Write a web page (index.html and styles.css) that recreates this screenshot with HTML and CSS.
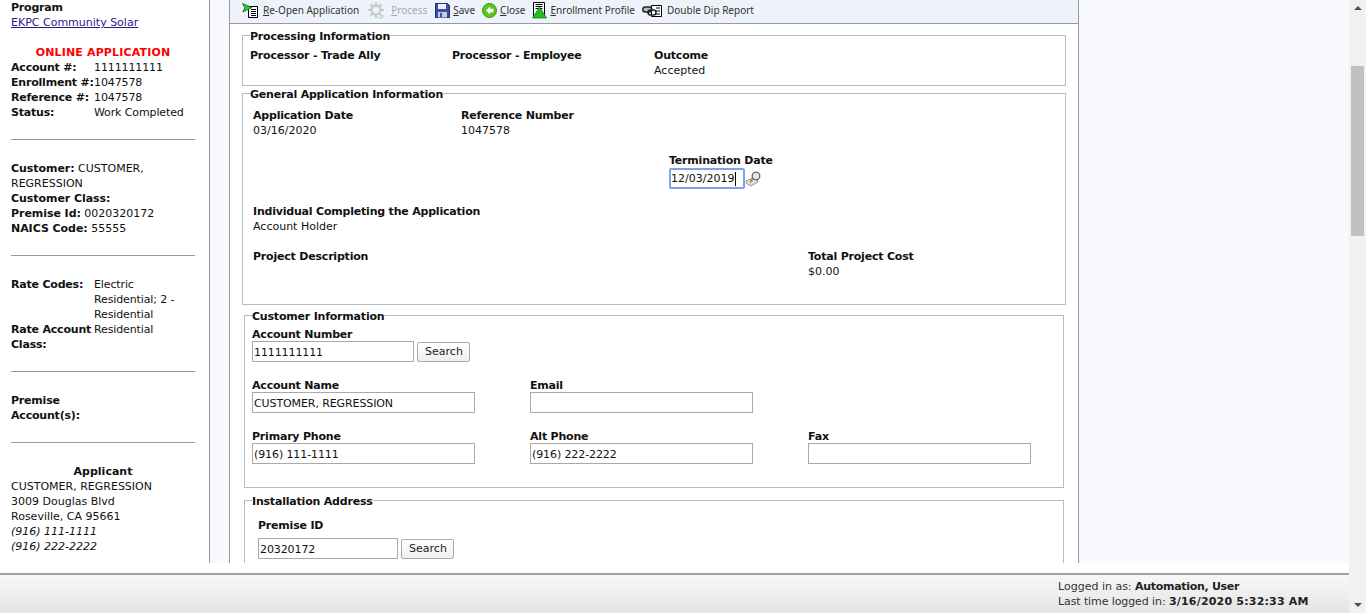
FILE: index.html
```html
<!DOCTYPE html>
<html lang="en">
<head>
    <meta charset="UTF-8">
    <title>Application</title>
    <link rel="stylesheet" href="styles.css">
</head>
<body>
<div class="window">
    <div class="page">
        <div class="content">
            <aside class="sidebar">
                <div class="bold">Program</div>
                <div><a href="#">EKPC Community Solar</a></div>
                <div class="online">ONLINE APPLICATION</div>
                <div class="pairs">
                    <b>Account #:</b><span>1111111111</span>
                    <b>Enrollment #:</b><span>1047578</span>
                    <b>Reference #:</b><span>1047578</span>
                    <b>Status:</b><span>Work Completed</span>
                </div>
                <hr>
                <div class="info"><b>Customer:</b> CUSTOMER, REGRESSION</div>
                <div class="info"><b>Customer Class:</b></div>
                <div class="info"><b>Premise Id:</b> 0020320172</div>
                <div class="info"><b>NAICS Code:</b> 55555</div>
                <hr>
                <div class="pairs">
                    <b>Rate Codes:</b><span>Electric Residential; 2 - Residential</span>
                    <b>Rate Account Class:</b><span>Residential</span>
                </div>
                <hr>
                <div class="pairs">
                    <b>Premise Account(s):</b><span></span>
                </div>
                <hr>
                <div class="applicant-title">Applicant</div>
                <div>CUSTOMER, REGRESSION</div>
                <div>3009 Douglas Blvd</div>
                <div>Roseville, CA 95661</div>
                <div><i>(916) 111-1111</i></div>
                <div><i>(916) 222-2222</i></div>
            </aside>
            <main class="main">
                <div class="toolbar">
                    <a class="tool tool-reopen" href="#">
                        <svg width="17" height="16" viewBox="0 0 17 16"><path d="M6.500 3.500h9v11h-9z" fill="#fff" stroke="#000"/><path d="M9 6.500h5M9 8.500h5M9 10.500h5M9 12.500h5" stroke="#000"/><path d="M.500 .500L10 4.500 .800 9l2-4.200z" fill="#35c435" stroke="#0a6a0a" stroke-width=".8"/></svg>
                        <span><u>R</u>e-Open Application</span>
                    </a>
                    <a class="tool tool-process" href="#">
                        <svg width="18" height="18" viewBox="0 0 18 18"><circle cx="8" cy="8" r="4.500" fill="none" stroke="#ccc" stroke-width="2.500"/><path d="M8 0v3M8 13v3M0 8h3M13 8h3M2.300 2.300l2 2M11.700 11.700l2 2M13.700 2.300l-2 2M4.300 11.700l-2 2" stroke="#c8c8c8" stroke-width="2"/><path d="M9 16l6-4 2 3-4 2z" fill="#cfe0d0"/></svg>
                        <span><u>P</u>rocess</span>
                    </a>
                    <a class="tool" href="#">
                        <svg width="15" height="15" viewBox="0 0 15 15"><path d="M.500.500h12l2 2v12H.500z" fill="#3c4fa8" stroke="#23306e"/><path d="M3 1h8v5H3z" fill="#eef"/><path d="M3 9h9v5.500H3z" fill="#c6cbe0"/><path d="M5 10h2v4H5z" fill="#3c4fa8"/></svg>
                        <span><u>S</u>ave</span>
                    </a>
                    <a class="tool" href="#">
                        <svg width="15" height="15" viewBox="0 0 15 15"><circle cx="7.500" cy="7.500" r="7" fill="#5cc41e" stroke="#3a9a12"/><path d="M8 3.500L4 7.500l4 4V9.200h3.500V5.800H8z" fill="#fff"/></svg>
                        <span><u>C</u>lose</span>
                    </a>
                    <a class="tool" href="#">
                        <svg width="15" height="17" viewBox="0 0 15 17"><path d="M1.500.500h11v14h-11z" fill="#fff" stroke="#000"/><path d="M3.500 2.500h7M3.500 4.500h7M3.500 6.500h7" stroke="#000"/><path d="M7.500 5L14.500 16H.500z" fill="#22c022" stroke="#0a6a0a" stroke-width=".7"/></svg>
                        <span><u>E</u>nrollment Profile</span>
                    </a>
                    <a class="tool tool-dip" href="#">
                        <svg width="20" height="14" viewBox="0 0 20 14"><path d="M9.500 1.500h10v11h-10z" fill="#fff" stroke="#000"/><path d="M14 4h4M14 7h4M14 10h4" stroke="#000"/><rect x=".800" y="3" width="9" height="5" rx="2.500" fill="#bbb" stroke="#222" stroke-width="1.500"/><rect x="6" y="6" width="8" height="5" rx="2.500" fill="none" stroke="#222" stroke-width="1.500"/></svg>
                        <span>Double Dip Report</span>
                    </a>
                </div>
                <div class="sheet">
                    <fieldset class="box box-wide box-processing">
                        <legend>Processing Information</legend>
                        <div class="proc-row">
                            <div class="proc-col"><b>Processor - Trade Ally</b></div>
                            <div class="proc-col"><b>Processor - Employee</b></div>
                            <div class="proc-col"><b>Outcome</b><br>Accepted</div>
                        </div>
                    </fieldset>
                    <fieldset class="box box-wide box-general">
                        <legend>General Application Information</legend>
                        <div class="gen-row">
                            <div class="gen-col"><b>Application Date</b><br>03/16/2020</div>
                            <div class="gen-col"><b>Reference Number</b><br>1047578</div>
                        </div>
                        <div class="gen-row term-row">
                            <div class="gen-col"></div>
                            <div class="gen-col"></div>
                            <div class="gen-col">
                                <b>Termination Date</b>
                                <div class="date-line">
                                    <span class="date-wrap">
                                        <input class="date-input" type="text" value="12/03/2019">
                                        <span class="caret"></span>
                                    </span>
                                    <svg width="17" height="17" viewBox="0 0 17 17"><path d="M1 11l7-3 5 3-7 4z" fill="#fff" stroke="#888"/><path d="M1 11v2l5 3 7-4v-1" fill="#ddd" stroke="#999"/><circle cx="11" cy="6" r="3.800" fill="#dce8ee" stroke="#666" stroke-width="1.300"/><path d="M8 9l-3 3" stroke="#c8792a" stroke-width="2"/></svg>
                                </div>
                            </div>
                        </div>
                        <div class="individual"><b>Individual Completing the Application</b><br>Account Holder</div>
                        <div class="project">
                            <b>Project Description</b>
                            <div class="project-cost"><b>Total Project Cost</b><br>$0.00</div>
                        </div>
                    </fieldset>
                    <fieldset class="box box-narrow box-customer">
                        <legend>Customer Information</legend>
                        <div class="field-label"><b>Account Number</b></div>
                        <div class="search-line">
                            <input class="text-input input-account" type="text" value="1111111111">
                            <button class="btn" type="button">Search</button>
                        </div>
                        <div class="field-grid">
                            <div><b>Account Name</b><input class="text-input" type="text" value="CUSTOMER, REGRESSION"></div>
                            <div><b>Email</b><input class="text-input" type="text"></div>
                            <div></div>
                            <div><b>Primary Phone</b><input class="text-input" type="text" value="(916) 111-1111"></div>
                            <div><b>Alt Phone</b><input class="text-input" type="text" value="(916) 222-2222"></div>
                            <div><b>Fax</b><input class="text-input" type="text"></div>
                        </div>
                    </fieldset>
                    <fieldset class="box box-narrow box-install">
                        <legend>Installation Address</legend>
                        <div class="premise-label"><b>Premise ID</b></div>
                        <div class="search-line">
                            <input class="text-input input-premise" type="text" value="20320172">
                            <button class="btn" type="button">Search</button>
                        </div>
                    </fieldset>
                </div>
            </main>
        </div>
        <footer class="footer">
            <div class="login-info">
                <div>Logged in as: <b class="user">Automation, User</b></div>
                <div class="last-login">Last time logged in: <b class="stamp">3/16/2020 5:32:33 AM</b></div>
            </div>
        </footer>
    </div>
    <div class="scrollbar">
        <div class="arrow arrow-up"></div>
        <div class="thumb"></div>
        <div class="arrow arrow-down"></div>
    </div>
</div>
</body>
</html>
```
FILE: styles.css
```css
* {
    box-sizing: border-box;
}
html, body {
    height: 100%;
    margin: 0;
    overflow: hidden;
}
body {
    font-family: "DejaVu Sans", sans-serif;
    font-size: 11px;
    line-height: 15px;
    color: #111;
    background: #fff;
}
b, legend, .bold {
    letter-spacing: -0.2px;
}
.window {
    display: flex;
    height: 613px;
}
.page {
    flex: 1;
    min-width: 0;
    display: flex;
    flex-direction: column;
}
.content {
    display: flex;
    height: 563px;
    overflow: hidden;
    background: #f8f9ff;
}
.sidebar {
    width: 210px;
    flex: none;
    padding: 0 14px 0 11px;
    background: #fff;
    border-right: 1px solid #999;
}
.sidebar a {
    color: #2a1a8a;
}
.sidebar span {
    letter-spacing: -0.12px;
}
.bold {
    font-weight: bold;
}
.info b {
    letter-spacing: -0.05px;
}
.online {
    margin-top: 15px;
    color: #f00;
    font-weight: bold;
    text-align: center;
    letter-spacing: 0.15px;
}
.pairs {
    display: grid;
    grid-template-columns: 83px 1fr;
}
hr {
    height: 1px;
    margin: 19px 0 21px;
    border: none;
    background: #999;
}
.applicant-title {
    font-weight: bold;
    text-align: center;
}
.main {
    width: 850px;
    flex: none;
    margin-left: 19px;
    background: #fff;
    border-left: 1px solid #999;
    border-right: 1px solid #999;
}
.toolbar {
    display: flex;
    align-items: center;
    height: 24px;
    padding: 0 0 2px 12px;
    background: #eef2fa;
    border-bottom: 1px solid #999;
}
.tool {
    display: flex;
    align-items: center;
    gap: 3px;
    margin-right: 7px;
    font-family: "Noto Sans", sans-serif;
    font-size: 10px;
    color: #333;
    text-decoration: none;
}
.tool-reopen {
    gap: 4px;
    margin-right: 9px;
}
.tool-process {
    gap: 5px;
    margin-right: 8px;
    color: #aaa;
}
.tool-dip {
    gap: 5px;
}
.sheet {
    padding: 3px 12px 0;
}
.box {
    display: block;
    margin: 0;
    min-width: 0;
    border: 1px solid #bbb;
}
.box legend {
    padding: 2px 0 0;
    font-weight: bold;
}
.box-wide {
    width: 824px;
    padding: 3px 7px 0;
}
.box-narrow {
    width: 820px;
    margin-left: 2px;
    padding: 0 7px;
}
.box-processing {
    height: 59px;
}
.proc-row {
    display: flex;
    padding-top: 1px;
}
.proc-col {
    width: 202px;
}
.box-general {
    height: 220px;
    margin-top: -1px;
    padding-left: 10px;
    padding-top: 6px;
}
.box-general legend {
    margin-left: -3px;
}
.gen-row {
    display: flex;
}
.gen-col {
    width: 208px;
}
.term-row {
    margin-top: 15px;
}
.date-line {
    display: flex;
    align-items: center;
    height: 21px;
}
.date-wrap {
    position: relative;
    display: block;
}
.date-input {
    display: block;
    width: 76px;
    height: 21px;
    padding: 0;
    font: 11px "DejaVu Sans", sans-serif;
    color: #111;
    border: 2px solid #7aa5e8;
    border-radius: 2px;
    outline: none;
}
.caret {
    position: absolute;
    left: 66px;
    top: 4px;
    width: 1px;
    height: 14px;
    background: #000;
}
.individual {
    margin-top: 15px;
}
.project {
    display: flex;
    justify-content: space-between;
    margin-top: 15px;
}
.project-cost {
    width: 250px;
}
.box-customer {
    height: 181px;
    margin-top: 2px;
}
.field-label {
    height: 17px;
    padding-top: 3px;
}
.search-line {
    display: flex;
    align-items: center;
    gap: 3px;
}
.text-input {
    display: block;
    width: 223px;
    height: 21px;
    padding: 2px 1px 0;
    font: 11px "DejaVu Sans", sans-serif;
    letter-spacing: -0.1px;
    color: #111;
    background: #fff;
    border: 1px solid #a9a9a9;
    outline: none;
}
.input-account {
    width: 162px;
}
.input-premise {
    width: 140px;
}
.btn {
    width: 53px;
    height: 20px;
    padding: 0 0 0 1px;
    font: 11px "DejaVu Sans", sans-serif;
    color: #222;
    background: linear-gradient(#fff, #eee);
    border: 1px solid #aaa;
    border-radius: 2px;
}
.field-grid {
    display: grid;
    grid-template-columns: repeat(3, 278px);
    row-gap: 16px;
    margin-top: 16px;
}
.field-grid b {
    display: block;
    height: 14px;
}
.box-install {
    height: 90px;
    margin-top: 4px;
    padding-left: 13px;
}
.box-install legend {
    margin-left: -6px;
}
.premise-label {
    padding: 9px 0 5px;
}
.footer {
    display: flex;
    justify-content: flex-end;
    height: 40px;
    margin-top: 10px;
    padding: 4px 40px 0 0;
    background: linear-gradient(#f7f7f7, #e4e4e4);
    border-top: 2px solid #a0a0a0;
    color: #333;
}
.footer b {
    color: #222;
}
.footer .user {
    letter-spacing: -0.3px;
}
.footer .stamp {
    letter-spacing: 0.2px;
}
.last-login {
    letter-spacing: -0.1px;
}
.login-info {
    width: 251px;
}
.scrollbar {
    position: relative;
    width: 17px;
    flex: none;
    background: #f1f1f1;
}
.thumb {
    position: absolute;
    left: 2px;
    top: 66px;
    width: 13px;
    height: 170px;
    background: #c1c1c1;
}
.arrow {
    position: absolute;
    left: 5px;
    width: 0;
    height: 0;
    border-left: 4px solid transparent;
    border-right: 4px solid transparent;
}
.arrow-up {
    top: 6px;
    border-bottom: 4px solid #505050;
}
.arrow-down {
    bottom: 6px;
    border-top: 4px solid #505050;
}
```
